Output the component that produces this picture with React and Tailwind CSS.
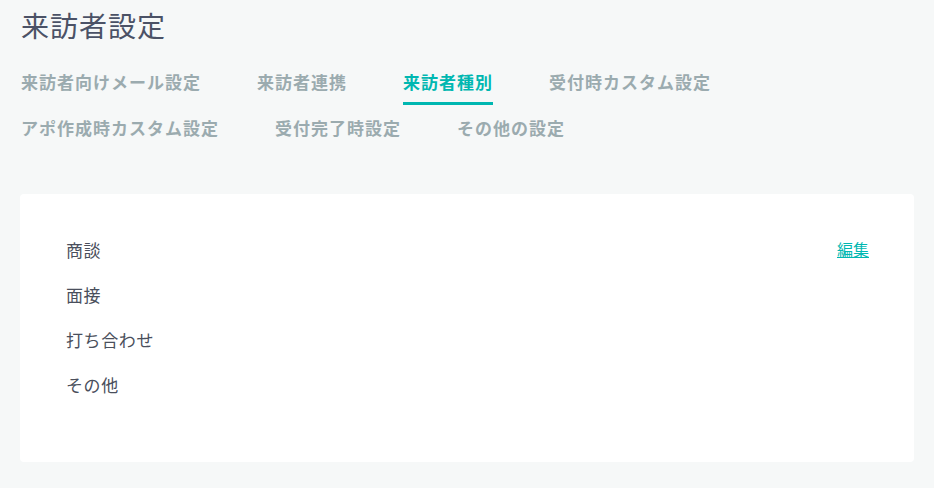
import { useState } from "react";

const tabs = [
  "来訪者向けメール設定",
  "来訪者連携",
  "来訪者種別",
  "受付時カスタム設定",
  "アポ作成時カスタム設定",
  "受付完了時設定",
  "その他の設定",
];

const visitorTypes = ["商談", "面接", "打ち合わせ", "その他"];

export default function App() {
  const [active, setActive] = useState("来訪者種別");

  return (
    <div
      className="min-h-screen bg-[#f6f8f8] px-5 pt-1"
      style={{ fontFamily: '"Noto Sans CJK JP", "Noto Sans", sans-serif' }}
    >
      <h1 className="pl-px text-[28px] leading-[42px] font-normal tracking-[1px] text-[#4b5266]">
        来訪者設定
      </h1>

      <nav className="mt-6 flex flex-wrap gap-x-14 gap-y-[11px] pl-px">
        {tabs.map((tab) => {
          const isActive = tab === active;
          return (
            <button
              key={tab}
              type="button"
              onClick={() => setActive(tab)}
              className={`border-b-[3px] pb-2 text-[17px] leading-6 font-bold tracking-[1px] ${
                isActive
                  ? "border-[#00b7b1] text-[#00b7b1]"
                  : "border-transparent text-[#9babaf]"
              }`}
            >
              {tab}
            </button>
          );
        })}
      </nav>

      <section className="mt-[43px] flex h-[268px] justify-between rounded bg-white pt-[33px] pr-[45px] pl-[46px]">
        <ul className="flex flex-col">
          {visitorTypes.map((type) => (
            <li
              key={type}
              className="text-[17px] leading-[45px] tracking-[0.6px] text-[#4a4f5c]"
            >
              {type}
            </li>
          ))}
        </ul>
        <a
          href="#"
          className="mt-[10px] self-start text-[16px] leading-6 text-[#00b7b1] underline"
        >
          編集
        </a>
      </section>
    </div>
  );
}
